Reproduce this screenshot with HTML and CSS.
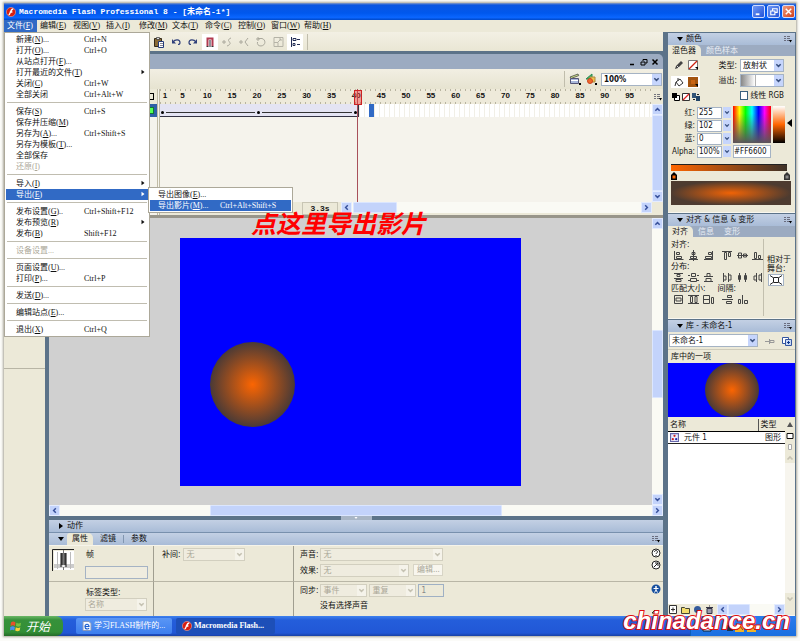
FILE: index.html
```html
<!DOCTYPE html>
<html lang="zh-CN">
<head>
<meta charset="utf-8">
<title>Macromedia Flash Professional 8 - [未命名-1*]</title>
<link rel="stylesheet" href="styles.css">
</head>
<body>
<svg class="defs" aria-hidden="true">
  <symbol id="down" viewBox="0 0 8 8"><path d="M1.5 2.5 4 5 6.5 2.5" fill="none" stroke="currentColor" stroke-width="1.7"/></symbol>
  <symbol id="up" viewBox="0 0 8 8"><path d="M1.5 5.5 4 3 6.5 5.5" fill="none" stroke="currentColor" stroke-width="1.7"/></symbol>
  <symbol id="left" viewBox="0 0 8 8"><path d="M5.5 1.5 3 4 5.5 6.5" fill="none" stroke="currentColor" stroke-width="1.7"/></symbol>
  <symbol id="right" viewBox="0 0 8 8"><path d="M2.5 1.5 5 4 2.5 6.5" fill="none" stroke="currentColor" stroke-width="1.7"/></symbol>
  <symbol id="tri-d" viewBox="0 0 8 8"><path d="M1 2h6L4 6z"/></symbol>
  <symbol id="tri-r" viewBox="0 0 8 8"><path d="M2 1v6l4-3z"/></symbol>
  <symbol id="opts" viewBox="0 0 8 8"><path d="M0 1.5h2M0 3.5h2M0 5.5h2M3 1.5h3M3 3.5h3M3 5.5h3" stroke="#556" stroke-width=".8" fill="none"/><path d="M5 5h3L6.500 7.500z"/></symbol>
  <symbol id="flash" viewBox="0 0 10 10"><circle cx="5" cy="5" r="4.600" fill="#d81e10" stroke="#ffb9a0" stroke-width=".5"/><path d="M7.300 2C5.500 2 5 3.500 4.500 5S3.600 7.700 2.600 8M3.800 5h2.600" stroke="#fff" stroke-width="1.300" fill="none"/></symbol>
  <symbol id="al1" viewBox="0 0 11 11"><path d="M1.500 1v9M1.500 9.500h9M3.500 2.500h3v2h-3zM3.500 6.500h5v2h-5z"/></symbol>
  <symbol id="al2" viewBox="0 0 11 11"><path d="M5.500 0v11M1 9.500h9M4 2.500h3v2h-3zM2.500 6.500h6v2h-6z"/></symbol>
  <symbol id="al3" viewBox="0 0 11 11"><path d="M9.500 1v9M1 9.500h9M5.500 2.500h3v2h-3zM2.500 6.500h6v2h-6z"/></symbol>
  <symbol id="al4" viewBox="0 0 11 11"><path d="M0 1.500h10M2.500 2.500h2v7h-2zM6.500 2.500h2v4h-2z"/></symbol>
  <symbol id="al5" viewBox="0 0 11 11"><path d="M0 5.500h11M1.500 3h3v5h-3zM6.500 4h3v3h-3z"/></symbol>
  <symbol id="al6" viewBox="0 0 11 11"><path d="M0 9.500h11M2.500 2.500h2v6h-2zM6.500 5.500h2v3h-2z"/></symbol>
  <symbol id="ds1" viewBox="0 0 11 11"><path d="M1 1.500h9M1 6.500h9M4 2.500h3v2h-3zM3 7.500h5v2h-5z"/></symbol>
  <symbol id="ds2" viewBox="0 0 11 11"><path d="M0 3.500h2M9 3.500h2M0 8.500h2M9 8.500h2M3.500 1.500h4v3h-4zM2.500 6.500h6v3h-6z"/></symbol>
  <symbol id="ds3" viewBox="0 0 11 11"><path d="M1 4.500h9M1 9.500h9M4 1.500h3v3h-3zM3 6.500h5v3h-5z"/></symbol>
  <symbol id="ds4" viewBox="0 0 11 11"><path d="M1.500 1v9M6.500 1v9M1.500 4h2.500v4h-2.500M6.500 3h2.500v5h-2.500"/></symbol>
  <symbol id="ds5" viewBox="0 0 11 11"><path d="M2.500 1v9M8.500 1v9M1.500 3.500h2v4h-2zM7.500 3.500h2v4h-2z"/></symbol>
  <symbol id="ds6" viewBox="0 0 11 11"><path d="M4.500 1v9M9.500 1v9M4.500 4h-2.500v4h2.500M9.500 3h-2.500v5h2.500"/></symbol>
  <symbol id="mt1" viewBox="0 0 11 11"><path d="M1.500 1.500h8v8h-8zM3 4h5v3H3z"/></symbol>
  <symbol id="mt2" viewBox="0 0 11 11"><path d="M0 1.500h11M0 9.500h11M2.500 2.500h2v6h-2zM7 2.500h2v6h-2z"/></symbol>
  <symbol id="mt3" viewBox="0 0 11 11"><path d="M0.500 1.500h6v8h-6zM0 5.500h6M8.500 3.500h2v6h-2z"/></symbol>
  <symbol id="mt4" viewBox="0 0 11 11"><path d="M5.500 1.500h4v2h-4zM0 5.500h11M4.500 7.500h5v2h-5z"/></symbol>
  <symbol id="mt5" viewBox="0 0 11 11"><path d="M5.500 1v9M1.500 5.500h2v4h-2zM7.500 6.500h3v3h-3z"/></symbol>
</svg>

<div class="app">
  <header class="titlebar">
    <svg class="i10"><use href="#flash"/></svg>
    <h1>Macromedia Flash Professional 8 - [未命名-1*]</h1>
    <div class="winbtns">
      <button aria-label="最小化"><svg viewBox="0 0 12 12"><path d="M3 9h4" stroke="#fff" stroke-width="2"/></svg></button>
      <button aria-label="还原"><svg viewBox="0 0 12 12"><path d="M5 5V3h5v4H8M3 5.500h4.500v4H3z" stroke="#fff" fill="none" stroke-width="1.200"/></svg></button>
      <button class="close" aria-label="关闭"><svg viewBox="0 0 12 12"><path d="m3 3 6 6M9 3 3 9" stroke="#fff" stroke-width="1.600"/></svg></button>
    </div>
  </header>

  <nav class="menubar">
    <button class="on">文件(<u>F</u>)</button><button>编辑(<u>E</u>)</button><button>视图(<u>V</u>)</button><button>插入(<u>I</u>)</button><button>修改(<u>M</u>)</button><button>文本(<u>T</u>)</button><button>命令(<u>C</u>)</button><button>控制(<u>O</u>)</button><button>窗口(<u>W</u>)</button><button>帮助(<u>H</u>)</button>
    <div class="menu">
      <button>新建(<u>N</u>)...<kbd>Ctrl+N</kbd></button>
      <button>打开(<u>O</u>)...<kbd>Ctrl+O</kbd></button>
      <button>从站点打开(<u>F</u>)...</button>
      <button>打开最近的文件(<u>T</u>)<svg class="arr"><use href="#tri-r"/></svg></button>
      <button>关闭(<u>C</u>)<kbd>Ctrl+W</kbd></button>
      <button>全部关闭<kbd>Ctrl+Alt+W</kbd></button>
      <hr>
      <button>保存(<u>S</u>)<kbd>Ctrl+S</kbd></button>
      <button>保存并压缩(<u>M</u>)</button>
      <button>另存为(<u>A</u>)...<kbd>Ctrl+Shift+S</kbd></button>
      <button>另存为模板(<u>T</u>)...</button>
      <button>全部保存</button>
      <button disabled>还原(<u>I</u>)</button>
      <hr>
      <button>导入(<u>I</u>)<svg class="arr"><use href="#tri-r"/></svg></button>
      <div class="has-sub">
        <button class="on">导出(<u>E</u>)<svg class="arr"><use href="#tri-r"/></svg></button>
        <div class="submenu">
          <button>导出图像(<u>E</u>)...</button>
          <button class="on">导出影片(<u>M</u>)...<kbd>Ctrl+Alt+Shift+S</kbd></button>
        </div>
      </div>
      <hr>
      <button>发布设置(<u>G</u>)..<kbd>Ctrl+Shift+F12</kbd></button>
      <button>发布预览(<u>R</u>)<svg class="arr"><use href="#tri-r"/></svg></button>
      <button>发布(<u>B</u>)<kbd>Shift+F12</kbd></button>
      <hr>
      <button disabled>设备设置...</button>
      <hr>
      <button>页面设置(<u>U</u>)...</button>
      <button>打印(<u>P</u>)...<kbd>Ctrl+P</kbd></button>
      <hr>
      <button>发送(<u>D</u>)...</button>
      <hr>
      <button>编辑站点(<u>E</u>)...</button>
      <hr>
      <button>退出(<u>X</u>)<kbd>Ctrl+Q</kbd></button>
    </div>
  </nav>

  <div class="main">
    <div class="workspace">
      <div class="toolbar">
        <button aria-label="粘贴"><svg viewBox="0 0 12 12"><path d="M1.500 2.500h7v8h-7z" fill="#8a6a35" stroke="#332a1a"/><path d="M3.500 1.500h3v2h-3z" fill="#ddd" stroke="#333" stroke-width=".7"/><path d="M5.500 5.500h5v6h-5z" fill="#fff" stroke="#223a7a"/><path d="M7 7.500h3M7 9.500h3" stroke="#556" stroke-width=".7"/></svg></button>
        <button aria-label="撤消"><svg viewBox="0 0 12 12"><path d="M3 6c2-3 7-3 7 .5 0 1-1 2-2 2" fill="none" stroke="#30407a" stroke-width="1.200"/><path d="M2 3v4.500h4z" fill="#30407a"/></svg></button>
        <button aria-label="重做"><svg viewBox="0 0 12 12"><path d="M9 6c-2-3-7-3-7 .5 0 1 1 2 2 2" fill="none" stroke="#30407a" stroke-width="1.200"/><path d="M10 3v4.500H6z" fill="#30407a"/></svg></button>
        <button class="down" aria-label="贴紧至对象"><svg viewBox="0 0 12 12"><path d="M3.500 10V2.500h5V10" fill="none" stroke="#b23a50" stroke-width="2"/><path d="M2.500 10.500h2M7.500 10.500h2" stroke="#333"/><path d="M6 4v7" stroke="#223"/></svg></button>
        <button aria-label="平滑"><svg viewBox="0 0 12 12"><path d="M1 6h4M3 4v4M10 2C7 3 7 5 8.500 6S9 9 6 10" fill="none" stroke="#aaa89c"/></svg></button>
        <button aria-label="伸直"><svg viewBox="0 0 12 12"><path d="M1 6h4M3 4v4M10 2 7 6l3 4" fill="none" stroke="#aaa89c"/></svg></button>
        <button aria-label="旋转"><svg viewBox="0 0 12 12"><path d="M3 2.500h4c4 1 4 7-1 7.500-3 0-4-2-3.500-4M3 1v4M1 3h4" fill="none" stroke="#aaa89c"/></svg></button>
        <button aria-label="缩放"><svg viewBox="0 0 12 12"><path d="M2 1.500h9v9H2zM2 6.500h4v4M6 6l3-3M7 3h2v2" fill="none" stroke="#b5b3a7"/></svg></button>
        <button class="down" aria-label="对齐"><svg viewBox="0 0 12 12"><path d="M2.500 1v10M4 2.500h3v2H4zM4 7.500h2v2H4zM8 3.500h3M8 8.500h3" fill="none" stroke="#222c55"/></svg></button>
        <i class="vsep"></i>
      </div>
      <div class="work-row">
        <aside class="tools" aria-label="工具"></aside>
        <div class="document">
          <div class="doc-title">
            <button aria-label="最小化"><svg viewBox="0 0 8 8"><path d="M1 6.500h4" stroke="#000" stroke-width="1.500"/></svg></button>
            <button aria-label="还原"><svg viewBox="0 0 8 8"><path d="M3 3V1.500h4V5H5.500M1 4h4v3H1z" fill="none" stroke="#000"/></svg></button>
            <button aria-label="关闭"><svg viewBox="0 0 8 8"><path d="m1.500 1.500 5 5M6.500 1.500l-5 5" stroke="#000" stroke-width="1.500"/></svg></button>
          </div>
          <div class="edit-bar">
            <i class="vsep"></i>
            <button aria-label="编辑场景"><svg viewBox="0 0 12 12"><path d="m1 4 8-3 .7 1.600L2 5.500z" fill="#cfe08a" stroke="#333" stroke-width=".7"/><path d="M1.500 5.500h8v5h-8z" fill="#a9b8dc" stroke="#557"/><path d="M2 7.500h7" stroke="#fff"/><path d="M10 10h2v2h-2z"/></svg></button>
            <button aria-label="编辑元件"><svg viewBox="0 0 12 12"><path d="m1 6 6-5v5z" fill="#3fb56c" stroke="#2a8a50"/><path d="M5 4h5v5H5z" fill="#f1c24a" stroke="#a84"/><circle cx="5" cy="8" r="2.500" fill="#f06a2a" stroke="#c42"/><path d="M10 10h2v2h-2z"/></svg></button>
            <span class="sel zoom"><select aria-label="缩放比例"><option>100%</option></select><svg><use href="#down"/></svg></span>
          </div>
          <div class="timeline">
            <div class="layers"><div class="layer-head"><i></i></div><div class="layer-row"><i></i></div></div>
            <div class="frames">
              <div class="ruler"><span>1</span><span>5</span><span>10</span><span>15</span><span>20</span><span>25</span><span>30</span><span>35</span><span>40</span><span>45</span><span>50</span><span>55</span><span>60</span><span>65</span><span>70</span><span>75</span><span>80</span><span>85</span><span>90</span><span>95</span></div>
              <div class="track">
                <div class="tween"><b></b><i></i><b></b><i></i><b></b></div>
                <div></div><div class="picked"></div><div></div>
              </div>
              <div class="frames-empty"></div>
              <div class="playhead"></div>
              <div class="frame-status">
                <span class="elapsed">3.3s</span>
                <div class="hbar"><button aria-label="向左"><svg><use href="#left"/></svg></button><i class="thumb t1"></i><button class="end" aria-label="向右"><svg><use href="#right"/></svg></button></div>
              </div>
            </div>
            <div class="tl-side">
              <button class="plain" aria-label="帧视图"><svg><use href="#opts"/></svg></button>
              <div class="vbar"><button aria-label="向上"><svg><use href="#up"/></svg></button><i class="thumb fill"></i><button aria-label="向下"><svg><use href="#down"/></svg></button></div>
              <div class="corner"></div>
            </div>
          </div>
          <div class="stage-wrap">
            <div class="pasteboard"><div class="movie"><div class="ball"></div></div></div>
            <div class="vbar stage-v"><button aria-label="向上"><svg><use href="#up"/></svg></button><i class="gap1"></i><i class="thumb t2"></i><button class="end" aria-label="向下"><svg><use href="#down"/></svg></button></div>
            <p class="note">点这里导出影片</p>
          </div>
          <div class="hbar stage-h"><button aria-label="向左"><svg><use href="#left"/></svg></button><i class="gap2"></i><i class="thumb t3"></i><button class="end" aria-label="向右"><svg><use href="#right"/></svg></button></div>
          <div class="splitter"><button aria-label="折叠"><svg><use href="#tri-d"/></svg></button></div>
          <div class="phead actions"><svg><use href="#tri-r"/></svg><span>动作</span></div>
          <div class="phead ptabs"><svg><use href="#tri-d"/></svg><button class="tab on">属性</button><button class="tab">滤镜</button><i></i><button class="tab">参数</button><svg class="opt"><use href="#opts"/></svg></div>
          <div class="props">
            <div class="cell frame-name">
              <svg class="frame-ico" viewBox="0 0 22 22"><path d="M.5 22V.5H22" fill="none" stroke="#222"/><path d="M2 2h20v19H2z" fill="#fff"/><path d="M2 15h20v4H2z" fill="#ccc"/><path d="M5.500 3v17M18.500 3v17" stroke="#bbb"/><path d="M9 4h5v12H9z" fill="#555"/><path d="M9 4v14M14 4v14" stroke="#111"/><path d="M11.500 1v20" stroke="#777"/><circle cx="11.500" cy="17" r="1" fill="#fff"/></svg>
              <div><label for="fname">帧</label><input id="fname" type="text"></div>
            </div>
            <div class="cell div tweening"><label for="tw">补间:</label><span class="sel off w62"><select id="tw" disabled><option>无</option></select><svg><use href="#down"/></svg></span></div>
            <div class="cell div">
              <div class="line"><label for="snd">声音:</label><span class="sel off w123"><select id="snd" disabled><option>无</option></select><svg><use href="#down"/></svg></span></div>
              <div class="line"><label for="fx">效果:</label><span class="sel off w88"><select id="fx" disabled><option>无</option></select><svg><use href="#down"/></svg></span><button class="edit" disabled>编辑...</button></div>
            </div>
            <div class="cell helps">
              <svg viewBox="0 0 10 10"><circle cx="5" cy="5" r="4" fill="#fff" stroke="#222"/><path d="M3.500 4C3.500 2 6.500 2 6.500 4 6.500 5 5 5 5 6M5 7v1" fill="none" stroke="#222"/></svg>
              <svg viewBox="0 0 10 10"><circle cx="5" cy="5" r="4" fill="#fff" stroke="#222"/><path d="m3 7 4-4M4 3h3v3" fill="none" stroke="#222"/></svg>
            </div>
            <div class="cell label-type"><label for="lt">标签类型:</label><span class="sel off w62"><select id="lt" disabled><option>名称</option></select><svg><use href="#down"/></svg></span></div>
            <div class="cell div"></div>
            <div class="cell div">
              <div class="line"><label for="sy">同步:</label><span class="sel off w46"><select id="sy" disabled><option>事件</option></select><svg><use href="#down"/></svg></span><span class="sel off w46"><select aria-label="循环方式" disabled><option>重复</option></select><svg><use href="#down"/></svg></span><input class="times" type="text" value="1" aria-label="次数" disabled></div>
              <p>没有选择声音</p>
            </div>
            <div class="cell helps"><svg viewBox="0 0 10 10"><circle cx="5" cy="5" r="4.500" fill="#174f9e"/><circle cx="5" cy="3" r="1" fill="#fff"/><path d="M2.500 4.500h5M5 4v2L3.500 8.500M5 6l1.500 2.500" fill="none" stroke="#fff"/></svg><svg class="last" viewBox="0 0 8 8"><path d="m1 5 3-3 3 3z" fill="#fff" stroke="#333"/></svg></div>
          </div>
        </div>
      </div>
    </div>

    <aside class="panels">
      <section>
        <div class="phead"><svg><use href="#tri-d"/></svg><span>颜色</span><svg class="opt"><use href="#opts"/></svg></div>
        <div class="tabs"><button class="on">混色器</button><button>颜色样本</button></div>
        <div class="mixer">
          <div class="mix-top">
            <div class="mix-tools">
              <div class="pair"><svg viewBox="0 0 10 10"><path d="m1 9 1-3 5-5 2 2-5 5z" fill="#444"/><path d="m3 6 2 2" stroke="#ddd"/></svg><svg viewBox="0 0 10 10"><path d="M.5.5h9v9h-9z" fill="#fff" stroke="#777"/><path d="M1 9 9 1" stroke="#c21" stroke-width="1.300"/><path d="M7 7h3v3z"/></svg></div>
              <div class="pair picked-pair"><svg viewBox="0 0 10 10"><path d="m2 5 4-3 3 4-4 3z" fill="#fff" stroke="#333"/><path d="M4 4V1M2 5 1 9" stroke="#333" fill="none"/></svg><svg viewBox="0 0 10 10"><path d="M0 0h10v10H0z" fill="#a3540f"/><path d="M3 3h4v4H3z" fill="#c96414"/><path d="M7 7h3v3z"/></svg></div>
              <div class="pair three"><svg viewBox="0 0 8 8"><path d="M2.500 2.500h5v5h-5z" fill="#fff" stroke="#000"/><path d="M0 0h5v5H0z"/></svg><svg viewBox="0 0 8 8"><path d="M.5.5h7v7h-7z" fill="#fff" stroke="#333"/><path d="M1 7 7 1" stroke="#d22" stroke-width="1.300"/></svg><svg viewBox="0 0 8 8"><path d="M0 0h4v5H0z" fill="#357"/><path d="M4 3h4v5H4z" fill="#246"/><path d="M5 1.500h2M1 6.500h2" stroke="#222"/></svg></div>
            </div>
            <div class="mix-form">
              <label for="ty">类型:</label><span class="sel"><select id="ty"><option>放射状</option></select><svg><use href="#down"/></svg></span>
              <label for="ov">溢出:</label><span class="sel overflow"><select id="ov"><option></option></select><svg><use href="#down"/></svg></span>
              <span></span><label class="check"><input type="checkbox">线性 RGB</label>
            </div>
          </div>
          <div class="rgb">
            <label for="r">红:</label><span class="num"><input id="r" value="255"><svg><use href="#down"/></svg></span>
            <label for="g">绿:</label><span class="num"><input id="g" value="102"><svg><use href="#down"/></svg></span>
            <label for="b">蓝:</label><span class="num"><input id="b" value="0"><svg><use href="#down"/></svg></span>
            <label for="a">Alpha:</label><span class="num"><input id="a" value="100%"><svg><use href="#down"/></svg></span>
            <div class="spectrum"></div><div class="bright"></div><svg class="mark" viewBox="0 0 5 8"><path d="M0 4 5 0v8z"/></svg>
            <input class="hex" value="#FF6600" aria-label="十六进制">
          </div>
          <div class="grad"></div>
          <div class="pegs"><svg viewBox="0 0 6 8"><path d="m3 0 3 3v5H0V3z"/><path d="M1.500 3.500h3v3h-3z" fill="#f60"/></svg><svg viewBox="0 0 6 8"><path d="m3 0 3 3v5H0V3z" fill="#333"/><path d="M1.500 3.500h3v3h-3z" fill="#888"/></svg></div>
          <div class="radial"></div>
        </div>
      </section>

      <section>
        <div class="phead"><svg><use href="#tri-d"/></svg><span>对齐 &amp; 信息 &amp; 变形</span><svg class="opt"><use href="#opts"/></svg></div>
        <div class="tabs"><button class="on">对齐</button><button>信息</button><button>变形</button></div>
        <div class="align">
          <div class="align-l">
            <h2>对齐:</h2>
            <div class="ico-row"><svg><use href="#al1"/></svg><svg><use href="#al2"/></svg><svg><use href="#al3"/></svg><i></i><svg><use href="#al4"/></svg><svg><use href="#al5"/></svg><svg><use href="#al6"/></svg></div>
            <h2>分布:</h2>
            <div class="ico-row"><svg><use href="#ds1"/></svg><svg><use href="#ds2"/></svg><svg><use href="#ds3"/></svg><i></i><svg><use href="#ds4"/></svg><svg><use href="#ds5"/></svg><svg><use href="#ds6"/></svg></div>
            <div class="h2s"><h2>匹配大小:</h2><h2>间隔:</h2></div>
            <div class="ico-row"><svg><use href="#mt1"/></svg><svg><use href="#mt2"/></svg><svg><use href="#mt3"/></svg><i></i><svg><use href="#mt4"/></svg><svg><use href="#mt5"/></svg></div>
          </div>
          <div class="align-r"><span>相对于<br>舞台:</span><button aria-label="相对于舞台"><svg viewBox="0 0 12 10"><path d="M3.500 2.500h5v5h-5zM0 .5l3 2M12 .5l-3 2M0 9.500l3-2M12 9.500l-3-2" fill="none" stroke="#222"/></svg></button></div>
        </div>
      </section>

      <section class="library">
        <div class="phead"><svg><use href="#tri-d"/></svg><span>库 - 未命名-1</span><svg class="opt"><use href="#opts"/></svg></div>
        <div class="lib-pick"><span class="sel"><select aria-label="库文档"><option>未命名-1</option></select><svg><use href="#down"/></svg></span>
          <svg viewBox="0 0 10 10"><path d="M0 5.500h4M4.500 3v5M5 4.500h4v2H5z" fill="none" stroke="#999"/></svg>
          <svg viewBox="0 0 10 10"><path d="M.5 1.500h6v6h-6z" fill="#fff" stroke="#3556a0"/><path d="M3.500 3.500h6v6h-6z" fill="#c8d8f4" stroke="#3556a0"/><path d="M5 6.500h3M6.500 5v3" stroke="#123a90"/></svg></div>
        <p class="lib-count">库中的一项</p>
        <div class="preview"><div class="ball"></div></div>
        <div class="lib-body">
          <table>
            <thead><tr><th>名称</th><th>类型</th></tr></thead>
            <tbody><tr><td><svg viewBox="0 0 8 8"><path d="M.5.5h7v7h-7z" fill="#e9ebff" stroke="#66a"/><circle cx="4" cy="2.500" r="1" fill="#c22"/><circle cx="2.500" cy="5.500" r="1" fill="#c22"/><circle cx="5.500" cy="5.500" r="1" fill="#22a"/></svg>元件 1</td><td>图形</td></tr></tbody>
          </table>
          <div class="lib-side"><button aria-label="排序"><svg viewBox="0 0 8 8"><path d="m4 1 3 5H1z" fill="#555"/></svg></button><button aria-label="宽视图"><svg viewBox="0 0 8 8"><path d="M1 1.500h6v5H1z" fill="#fff" stroke="#111"/></svg></button><button aria-label="窄视图"><svg viewBox="0 0 8 8"><path d="M2.500 1.500h3v5h-3z" fill="#fff" stroke="#aaa"/></svg></button><button aria-label="向上"><svg class="dim"><use href="#up"/></svg></button><i></i><button aria-label="向下"><svg class="dim"><use href="#down"/></svg></button></div>
        </div>
        <div class="lib-foot">
          <svg viewBox="0 0 9 9"><path d="M.5.5h7v8h-7zM2 4.500h4M4 2.500v4" fill="#fff" stroke="#333"/></svg>
          <svg viewBox="0 0 9 9"><path d="M.5 2.500h3l1 1h4v5h-8z" fill="#f3dc6a" stroke="#443"/></svg>
          <svg viewBox="0 0 9 9"><circle cx="4.500" cy="4.500" r="3.500" fill="#345a9c"/></svg>
          <svg viewBox="0 0 9 9"><path d="M2 3.500h5v5H2zM1 2.500h7M4 1h1" fill="#99a" stroke="#334"/></svg>
          <div class="hbar"><button aria-label="向左"><svg><use href="#left"/></svg></button><i class="thumb t4"></i><button class="end" aria-label="向右"><svg><use href="#right"/></svg></button></div>
        </div>
      </section>
    </aside>
  </div>

  <footer class="taskbar">
    <button class="start"><svg viewBox="0 0 12 12"><path d="M1 2.500c2-1.500 3-1 4.500 0L5 6C3.500 5 2 5 .5 6z" fill="#e8502a"/><path d="M6.300 2.700c1.500 1 3 1 4.700 0L10.500 6c-1.500 1-3 1-4.500 0z" fill="#7ac13f"/><path d="M.3 7C2 6 3.500 6 4.900 7l-.6 3.500C3 9.500 1.500 9.500 0 10.500z" fill="#4a8df0"/><path d="M5.800 7.200c1.500 1 3 1 4.500 0L9.700 10.500c-1.500 1-3 1-4.500 0z" fill="#f8cf3a"/></svg>开始</button>
    <button class="task"><svg viewBox="0 0 10 10"><path d="M1 .5h6l2 2v7H1z" fill="#f4f8ff" stroke="#89b"/><path d="M3 5.500h4C7 2.500 3 2.500 3 5.500s3 3 4 1.500" fill="none" stroke="#1b5fd0" stroke-width="1.200"/></svg>学习FLASH制作的...</button>
    <button class="task on"><svg><use href="#flash"/></svg>Macromedia Flash...</button>
    <div class="tray">
      <svg viewBox="0 0 60 10"><path d="M2 2h8v6H2z" fill="#cfe0ff" stroke="#123"/><path d="M26 2h6v6h-6z" fill="#234"/><path d="M34 2h9v7h-9zM46 2h9v7h-9z" fill="#f0b428"/><path d="m36 7 3-4 3 4M48 7l3-4 3 4" stroke="#933" fill="none"/></svg>
    </div>
    <strong class="site">chinadance.cn</strong>
  </footer>
</div>
</body>
</html>
```

FILE: styles.css
```css
* { box-sizing: border-box; }

:root {
  --face: #ece9d8;
  --slate: #5c7389;
  --pick: #316ac5;
  --scroll: #c3d3fb;
  --ui: "DejaVu Sans Condensed", "Noto Sans CJK SC", sans-serif;
  --song: "Liberation Serif", "Noto Sans CJK SC", serif;
}

body {
  margin: 0;
  height: 100vh;
  padding: 3px 4px 5px;
  background: #fbfbf8;
  font: 8px/11px var(--ui);
  color: #111;
  overflow: hidden;
}

button, input, select {
  margin: 0;
  padding: 0;
  border: 0;
  background: none;
  font: inherit;
  color: inherit;
  min-width: 0;
}

h1, h2, p, hr { margin: 0; font-size: inherit; font-weight: normal; }
svg { width: 8px; height: 8px; flex: none; display: block; }
.defs { position: absolute; width: 0; height: 0; }

.app {
  height: 100%;
  display: flex;
  flex-direction: column;
  background: var(--face);
  box-shadow: 0 0 2px 1px #aaa89c;
}

/* title bar */
.titlebar {
  display: flex;
  align-items: center;
  flex: none;
  height: 17px;
  padding: 0 1px 0 2px;
  gap: 3px;
  background: linear-gradient(#8a9cc0 0, #0a55e0 2px, #0058ee 60%, #0a66ff 85%, #0048c8);
  color: #fff;
}
.i10, .task svg { width: 10px; height: 10px; }
.titlebar h1 { flex: 1; font: bold 8px/14px "Liberation Mono", "Noto Sans CJK SC", monospace; }
.winbtns { display: flex; gap: 2px; }
.winbtns button {
  width: 13px;
  height: 13px;
  border: 1px solid #cfdcff;
  border-radius: 2px;
  background: linear-gradient(135deg, #6f98f5, #2253d8);
}
.winbtns .close { background: linear-gradient(135deg, #f09a7c, #d1401a); }
.winbtns svg { width: 11px; height: 11px; }

/* menus */
.menubar {
  position: relative;
  z-index: 5;
  display: flex;
  flex: none;
  height: 12px;
  font: 8px/12px var(--song);
}
.menubar > button { padding: 0 3px; width: 33px; white-space: nowrap; text-align: left; }
.menubar .on { background: var(--pick); color: #fff; }
.menu, .submenu {
  position: absolute;
  left: 0;
  top: 12px;
  width: 146px;
  padding: 1px;
  background: #fff;
  border: 1px solid #aca899;
  font: 8px/11px var(--song);
}
.menu button {
  position: relative;
  display: block;
  width: 100%;
  height: 11px;
  padding-left: 10px;
  text-align: left;
  white-space: nowrap;
}
.menu button:disabled { color: #aca899; }
.menu kbd { position: absolute; left: 78px; font: inherit; }
.menu hr { height: 1px; margin: 2px 1px 3px; border: 0; background: #c0bdb0; }
.arr { position: absolute; right: 2px; top: 2px; width: 6px; height: 6px; fill: currentColor; }
.has-sub { position: relative; }
.submenu { left: 142px; top: -2px; width: 145px; }
.submenu kbd { left: 70px; }
.submenu button { padding-left: 8px; }

/* window areas */
.main { flex: 1; display: flex; min-height: 0; background: var(--slate); }
.workspace { flex: 1; display: flex; flex-direction: column; min-width: 0; }
.toolbar {
  flex: none;
  display: flex;
  align-items: center;
  height: 19px;
  padding-left: 147px;
  gap: 1px;
  background: linear-gradient(#f3f0e4, #e9e6d4);
}
.toolbar button { width: 16px; height: 16px; padding: 2px; }
.toolbar .down { background: #fff; }
.toolbar svg, .edit-bar svg { width: 12px; height: 12px; }
.toolbar .vsep { margin-left: 3px; }
.vsep { width: 1px; height: 16px; background: #c0bdac; }
.work-row { flex: 1; display: flex; min-height: 0; }
.tools { flex: none; width: 41px; background: linear-gradient(var(--face) 317px, #b8b5a5 0, #b8b5a5 318px, var(--face) 0); }
.document { flex: 1; display: flex; flex-direction: column; min-width: 0; padding: 3px 0 0 4px; }
.doc-title {
  flex: none;
  display: flex;
  align-items: center;
  justify-content: flex-end;
  height: 15px;
  padding-right: 4px;
  gap: 3px;
  border-top-right-radius: 5px;
  background: #9cabc1;
}
.edit-bar {
  flex: none;
  display: flex;
  align-items: center;
  justify-content: flex-end;
  height: 20px;
  padding-right: 1px;
  gap: 4px;
  background: linear-gradient(#f2efe3, #e6e3d0);
}

/* drop-downs */
.sel {
  position: relative;
  display: flex;
  flex: none;
  height: 13px;
  border: 1px solid #a5b3c4;
  background: #fff;
}
.sel select { appearance: none; width: 100%; padding-left: 2px; line-height: 11px; opacity: 1; }
.sel svg, .num svg {
  width: 9px;
  height: 11px;
  padding: 1px;
  background: #c6d5fc;
  color: #39507f;
}
.sel svg { position: absolute; right: 0; top: 0; pointer-events: none; }
.sel.off { background: #efecdf; border-color: #d2cfbf; color: #aaa797; }
.sel.off svg { background: #f5f3ea; color: #c5c2b2; }
.edit-bar .sel svg { width: 9px; height: 11px; }
.zoom { width: 61px; font-weight: bold; }
.w62 { width: 62px; }
.w123 { width: 123px; }
.w88 { width: 89px; }
.w46 { width: 47px; }

/* timeline */
.timeline { flex: none; display: flex; height: 126px; background: #f5f3ec; }
.layers { flex: none; width: 111px; border-right: 3px double #c0bba6; }
.layer-head, .layer-row { display: flex; justify-content: flex-end; align-items: center; height: 15px; padding-right: 3px; background: var(--face); }
.layer-head i { width: 7px; height: 7px; border: 1px solid #000; }
.layer-row { height: 13px; background: #2f5fa8; }
.layer-row i { width: 7px; height: 7px; background: #5f5; border: 1px solid #173; }
.frames { position: relative; flex: 1; min-width: 0; display: flex; flex-direction: column; }
.ruler {
  flex: none;
  display: grid;
  grid-template-columns: 2fr repeat(19, 5fr) 2fr;
  height: 15px;
  background:
    repeating-linear-gradient(90deg, #b8b4a0 0 1px, transparent 1px 5px) 0 0 / 100% 2px no-repeat,
    repeating-linear-gradient(90deg, #b8b4a0 0 1px, transparent 1px 5px) 0 100% / 100% 2px no-repeat,
    #eeeada;
  font: bold 8px/14px "Liberation Sans", sans-serif;
  text-align: center;
}
.ruler span { min-width: 0; }
.track {
  flex: none;
  display: grid;
  grid-template-columns: 40fr 2fr 1fr 56fr;
  height: 13px;
  background: repeating-linear-gradient(90deg, #fff 0 4px, #f1efe6 4px 5px);
}
.tween {
  display: flex;
  align-items: center;
  padding: 5px 1px 0;
  gap: 2px;
  background: #e4e4f3;
  border: solid #334;
  border-width: 0 1px 1px 0;
}
.tween b { width: 3px; height: 3px; border-radius: 50%; background: #000; }
.tween i { flex: 1; height: 1px; background: #333; }
.picked { background: var(--pick); }
.frames-empty { flex: 1; }
.playhead { position: absolute; left: 40%; top: 0; bottom: 13px; width: 1px; background: #a8505a; }
.playhead::before { content: ""; position: absolute; left: -3px; top: 1px; width: 6px; height: 13px; border: 1px solid #c22; background: rgba(240, 60, 60, .45); }
.frame-status { flex: none; display: flex; height: 13px; padding-left: 142px; gap: 3px; background: var(--face); }
.elapsed { width: 36px; border: 1px solid #c8c5b4; font: bold 8px/11px "Liberation Mono", monospace; text-align: center; }
.tl-side { flex: none; width: 11px; display: flex; flex-direction: column; }
.plain { height: 15px; background: var(--face); padding: 2px; }
.corner { height: 13px; background: var(--face); }

/* scroll bars */
.hbar, .vbar { display: flex; background: #fafaf4; }
.hbar { flex: 1; height: 11px; }
.vbar { flex: 1; flex-direction: column; width: 11px; }
.hbar button, .vbar button { flex: none; width: 11px; height: 11px; padding: 1px; background: var(--scroll); border: 1px solid #e4ecff; color: #37509a; }
.hbar svg, .vbar svg { width: 7px; height: 7px; }
.end { margin-left: auto; }
.thumb { background: var(--scroll); border: 1px solid #dbe6ff; border-radius: 1px; }
.fill { flex: 1; }
.t1 { width: 44px; margin-left: 1px; }
.gap1 { flex: 38; }
.t2 { flex: 25; }
.stage-v::after { content: ""; flex: 36; order: 1; }
.stage-v .end { order: 2; margin: 0; }
.gap2 { flex: 148; }
.t3 { flex: 285; }
.stage-h::after { content: ""; flex: 148; order: 1; }
.stage-h .end { order: 2; }
.hbar.stage-h { flex: none; }
.t4 { width: 22px; }

/* stage */
.stage-wrap { position: relative; flex: 1; display: flex; min-height: 0; border-top: 3px solid #98958a; }
.pasteboard { flex: 1; display: flex; align-items: center; justify-content: center; background: #d0d0d0; }
.vbar.stage-v { flex: none; }
.movie { flex: none; width: 341px; height: 248px; padding: 104px 30px; background: #00f; }
.ball {
  width: 85px;
  height: 85px;
  border-radius: 50%;
  background: radial-gradient(closest-side, #fb6502, #4a3a36);
}
.note {
  position: absolute;
  left: 202px;
  top: -10px;
  color: #f00;
  font: italic bold 25px/28px "Noto Sans CJK SC", sans-serif;
}
.splitter { flex: none; height: 4px; display: flex; justify-content: center; }
.splitter button { width: 31px; height: 4px; background: #a9b6c6; display: flex; justify-content: center; }
.splitter svg { width: 6px; height: 4px; fill: #fff; }

/* panel headings */
.phead {
  flex: none;
  display: flex;
  align-items: center;
  height: 12px;
  padding: 0 3px 0 8px;
  gap: 2px;
  background: linear-gradient(#c3d0e4, #a9bcd7);
  line-height: 12px;
  white-space: nowrap;
}
.phead .opt { margin-left: auto; }
.actions { border-bottom: 1px solid #7890ad; height: 13px; }
.ptabs { align-items: stretch; }
.ptabs > svg { align-self: center; }
.tab { padding: 0 5px; }
.tab.on { background: var(--face); border-radius: 3px 5px 0 0; }
.ptabs i { width: 1px; margin: 2px 0; background: #8296b0; }

/* properties */
.props { flex: none; display: grid; grid-template-columns: 104px 140px 1fr 15px; grid-template-rows: 36px 34px; background: var(--face); border-top: 1px solid #f6f4ea; }
.cell { padding: 3px 0 0 6px; }
.cell:nth-child(-n+4) { border-bottom: 1px solid #b9b6a6; }
.div { border-left: 1px solid #a09e90; padding-top: 2px; }
.frame-name { display: flex; gap: 11px; padding-left: 3px; }
.frame-ico { width: 22px; height: 22px; }
.frame-name label, .label-type label { display: block; padding-left: 1px; }
.frame-name input { display: block; width: 63px; height: 13px; margin-top: 6px; border: 1px solid #a5b3c4; background: #efecdf; }
.tweening, .line { display: flex; gap: 3px; line-height: 13px; }
.tweening { padding-left: 8px; }
.line { height: 16px; gap: 2px; }
.line .sel + .edit { width: 30px; height: 12px; margin-left: 2px; background: #f8f6ee; border: 1px solid #d8d5c6; color: #aaa797; line-height: 10px; }
.times { width: 26px; height: 13px; padding-left: 2px; border: 1px solid #9fb0c4; color: #888; }
.label-type { padding-left: 36px; padding-top: 5px; }
.cell p { padding-left: 20px; }
.helps { padding: 2px 0 0 3px; display: flex; flex-direction: column; gap: 2px; }
.helps svg { width: 10px; height: 10px; }
.helps .last { width: 8px; height: 8px; margin-top: auto; }

/* right-hand panels */
.panels { flex: none; display: flex; flex-direction: column; gap: 1px; width: 133px; padding: 1px 1px 0 5px; }
.panels section { flex: none; background: var(--face); border-bottom: 1px solid #f9f7ef; }
.tabs { display: flex; height: 11px; background: #9cabc1; color: #e8edf4; line-height: 11px; }
.tabs button { padding: 0 5px; }
.tabs .on { padding: 0 5px 0 4px; background: var(--face); color: #111; border-radius: 0 5px 0 0; }
.mixer { height: 156px; padding: 3px 3px 0; }
.mix-top { display: flex; justify-content: space-between; padding-right: 8px; }
.mix-tools { display: flex; flex-direction: column; gap: 5px; width: 29px; }
.pair { display: flex; gap: 4px; padding: 1px 3px; }
.pair svg { width: 10px; height: 10px; }
.picked-pair { background: #fff; }
.three { gap: 2px; padding: 0 1px; }
.three svg { width: 8px; height: 8px; }
.mix-form { display: grid; grid-template-columns: auto 44px; gap: 2px 3px; line-height: 13px; }
.overflow { background: linear-gradient(90deg, #888, #fff 14px, #666 14px, #fff 15px); }
.check { display: flex; gap: 2px; white-space: nowrap; }
.check input { appearance: none; width: 9px; height: 9px; margin: 2px 0; border: 1px solid #39607f; background: #fff; }
.rgb {
  display: grid;
  grid-template-columns: 24px 34px 38px 12px 5px;
  grid-template-rows: repeat(4, 13px);
  column-gap: 2px;
  margin-top: 4px;
  line-height: 13px;
  text-align: right;
}
.rgb label { grid-column: 1; white-space: nowrap; justify-self: end; }
.num { grid-column: 2; display: flex; gap: 1px; align-items: center; }
.num input { flex: 1; width: 20px; height: 12px; padding-left: 1px; border: 1px solid #a5b3c4; background: #fff; }
.num svg { width: 8px; }
.spectrum {
  grid-area: 1 / 3 / 4 / 4;
  margin-bottom: 2px;
  background:
    linear-gradient(rgba(128, 128, 128, 0) 20%, #5a555a),
    linear-gradient(90deg, #f00, #ff0 17%, #0f0 33%, #0ff 50%, #00f 67%, #f0f 83%, #f00);
}
.bright { grid-area: 1 / 4 / 4 / 5; margin-bottom: 2px; background: linear-gradient(#fff, #f60 50%, #000); }
.mark { grid-area: 2 / 5; width: 5px; height: 8px; }
.hex { grid-area: 4 / 3 / 5 / 4; height: 13px; width: 38px; border: 1px solid #a5b3c4; background: #fff; }
.grad { height: 7px; margin: 6px 5px 0 0; border-top: 1px solid #222; background: linear-gradient(90deg, #f60, #3e3228); }
.pegs { display: flex; justify-content: space-between; height: 10px; padding: 1px 2px 0 0; }
.pegs svg { width: 6px; height: 8px; }
.radial { height: 24px; margin-right: 1px; background: radial-gradient(closest-side, #f06306, #4d3b30); }

.align { display: flex; height: 81px; padding: 2px 3px; }
.align-l { width: 93px; border-right: 1px solid #c2bfae; }
.ico-row { display: flex; gap: 4px; height: 11px; padding-left: 2px; fill: none; stroke: #444; }
.ico-row svg { width: 11px; height: 11px; }
.ico-row i { width: 0; }
.h2s { display: flex; gap: 12px; }
.align h2 { white-space: nowrap; }
.align-r { padding: 16px 0 0 3px; white-space: nowrap; line-height: 9px; }
.align-r button { display: block; width: 16px; height: 12px; margin: 1px 0 0 1px; padding: 0 1px; border: 1px solid #a5b3c4; background: #fff; }
.align-r svg { width: 12px; height: 10px; }

.panels .library { flex: 1; display: flex; flex-direction: column; min-height: 0; }
.lib-pick { display: flex; align-items: center; gap: 7px; padding: 2px 3px 2px 1px; }
.lib-pick .sel { flex: 1; }
.lib-pick > svg { width: 10px; height: 10px; }
.lib-count { padding: 1px 3px; border-top: 1px solid #cfccbb; }
.preview { flex: none; display: flex; align-items: center; justify-content: center; height: 54px; background: #00f; }
.preview .ball { width: 54px; height: 54px; }
.lib-body { flex: 1; display: flex; align-items: flex-start; margin-top: 2px; min-height: 0; background: #fff; }
table { flex: 1; border-collapse: collapse; }
th, td { height: 12px; padding: 0 2px; font-weight: normal; text-align: left; }
th { background: var(--face); border-bottom: 1px solid #000; }
th:last-child { width: 27px; border-left: 1px solid #555; }
td { border-bottom: 1px solid #222; white-space: nowrap; }
td:last-child { padding-left: 7px; }
td svg { display: inline-block; width: 9px; height: 9px; margin-right: 5px; vertical-align: middle; }
.lib-side { align-self: stretch; display: flex; flex-direction: column; width: 10px; background: #f7f5ee; }
.lib-side button { height: 11px; padding: 1px; background: var(--face); }
.lib-side i { flex: 1; }
.dim { color: #c5c2b2; }
.lib-foot { flex: none; display: flex; align-items: center; gap: 3px; height: 11px; padding-left: 1px; }
.lib-foot > svg { width: 9px; height: 9px; }
.lib-foot .hbar { margin-right: 10px; }

/* task bar */
.taskbar {
  position: relative;
  z-index: 1;
  flex: none;
  display: flex;
  align-items: stretch;
  height: 20px;
  background: linear-gradient(#3f82ee, #245edb 20%, #2157d6 85%, #1941a5);
  color: #fff;
  gap: 4px;
}
.start {
  display: flex;
  align-items: center;
  gap: 4px;
  width: 59px;
  margin-right: 9px;
  padding-left: 6px;
  border-radius: 0 7px 7px 0;
  background: linear-gradient(#6cb867, #36913a 20%, #338f36 80%, #256b28);
  font: italic 12px/20px "Noto Sans CJK SC", sans-serif;
}
.start svg { width: 12px; height: 12px; }
.task {
  display: flex;
  align-items: center;
  gap: 2px;
  width: 96px;
  margin: 2px 0;
  padding-left: 6px;
  border-radius: 2px;
  background: linear-gradient(#5a96f5, #3c7eee);
  font: 8px/12px var(--song);
  white-space: nowrap;
}
.task.on { width: 99px; background: #1d4fb8; font-weight: bold; }
.tray { width: 106px; margin-left: auto; padding: 7px 0 0 10px; background: linear-gradient(#2a7cec, #1a6fe0); border-left: 1px solid #0c5fb8; }
.tray svg { width: 60px; height: 10px; }
.site {
  position: absolute;
  right: 6px;
  bottom: 3px;
  font: italic bold 24px/24px "Liberation Sans", sans-serif;
  -webkit-text-stroke: 2px #e01010;
  paint-order: stroke;
}
```
